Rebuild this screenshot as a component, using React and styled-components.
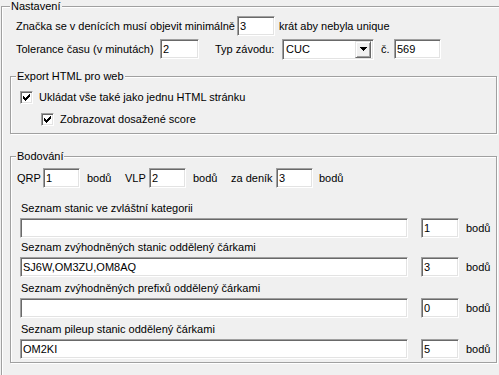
import React from "react";
import styled, { createGlobalStyle } from "styled-components";

const GlobalStyle = createGlobalStyle`
  html, body {
    margin: 0;
    padding: 0;
    background: #f0f0f0;
    overflow: hidden;
  }
  body {
    font-family: "Liberation Sans", Arial, sans-serif;
    font-size: 11px;
    color: #000;
  }
`;

const Page = styled.div`
  width: 499px;
  height: 375px;
  overflow: hidden;
  padding-left: 1px;
  box-sizing: border-box;
`;

const Group = styled.fieldset`
  margin: ${(p) => p.$margin || "0"};
  padding: 0;
  width: ${(p) => p.$w}px;
  box-sizing: border-box;
  min-width: 0;
  border: 1px solid #a0a0a0;
  box-shadow: inset 1px 1px #fff, 1px 1px #fff;
`;

const Legend = styled.legend`
  margin-left: ${(p) => p.$ml || 5}px;
  padding: 0 1px;
  line-height: 13px;
  height: 13px;
  background: #f0f0f0;
`;

const GroupBody = styled.div`
  padding: ${(p) => p.$pad};
`;

const Row = styled.div`
  display: flex;
  align-items: center;
  height: ${(p) => p.$h || 20}px;
  margin-top: ${(p) => p.$mt || 0}px;
  padding-left: ${(p) => p.$pl || 0}px;
`;

const Text = styled.span`
  white-space: nowrap;
  flex: none;
  width: ${(p) => (p.$w ? `${p.$w}px` : "auto")};
  margin-left: ${(p) => p.$ml || 0}px;
`;

const Edit = styled.input`
  box-sizing: border-box;
  flex: none;
  width: ${(p) => p.$w}px;
  height: 20px;
  margin: 0 0 0 ${(p) => p.$ml || 0}px;
  padding: 0 2px;
  border: 1px solid;
  border-color: #a0a0a0 #fff #fff #a0a0a0;
  box-shadow: inset 1px 1px #696969, inset -1px -1px #e3e3e3;
  background: #fff;
  font: inherit;
  color: #000;
  outline: none;
`;

const Combo = styled.div`
  box-sizing: border-box;
  flex: none;
  display: flex;
  align-items: center;
  width: ${(p) => p.$w}px;
  height: 21px;
  margin-left: ${(p) => p.$ml || 0}px;
  padding: 2px;
  border: 1px solid;
  border-color: #a0a0a0 #fff #fff #a0a0a0;
  box-shadow: inset 1px 1px #696969, inset -1px -1px #e3e3e3;
  background: #fff;
`;

const ComboValue = styled.span`
  flex: 1;
  padding-left: 1px;
`;

const DropButton = styled.span`
  box-sizing: border-box;
  width: 16px;
  height: 17px;
  display: flex;
  align-items: center;
  justify-content: center;
  background: #f0f0f0;
  border: 1px solid;
  border-color: #e3e3e3 #696969 #696969 #e3e3e3;
  box-shadow: inset 1px 1px #fff, inset -1px -1px #a0a0a0;
`;

const CheckRow = styled.label`
  display: flex;
  align-items: center;
  height: 16px;
  margin-top: ${(p) => p.$mt || 0}px;
  padding-left: ${(p) => p.$pl || 0}px;
  gap: 6px;
`;

const CheckBox = styled.span`
  box-sizing: border-box;
  width: 13px;
  height: 13px;
  flex: none;
  display: flex;
  align-items: center;
  justify-content: center;
  background: #fff;
  border: 1px solid;
  border-color: #a0a0a0 #fff #fff #a0a0a0;
  box-shadow: inset 1px 1px #696969, inset -1px -1px #e3e3e3;
`;

const ListLabel = styled.div`
  height: 13px;
  line-height: 13px;
  margin-top: ${(p) => p.$mt || 0}px;
  padding-left: 1px;
  white-space: nowrap;
`;

const ListRow = styled.div`
  display: flex;
  align-items: center;
  margin-top: 3px;
`;

const Check = () => (
  <CheckBox>
    <svg width="7" height="7" viewBox="0 0 7 7" shapeRendering="crispEdges">
      <path
        d="M6 0h1v3h-1v1h-1v1h-1v1h-1v1h-1v-1h-1v-1h-1v-3h1v1h1v1h1v-1h1v-1h1z"
        fill="#000"
      />
    </svg>
  </CheckBox>
);

const ListEntry = ({ label, value, points, mt }) => (
  <>
    <ListLabel $mt={mt}>{label}</ListLabel>
    <ListRow>
      <Edit $w={388} defaultValue={value} />
      <Edit $w={38} $ml={13} defaultValue={points} />
      <Text $ml={7}>bodů</Text>
    </ListRow>
  </>
);

export default function App() {
  return (
    <Page>
      <GlobalStyle />
      <Group $w={530}>
        <Legend $ml={8}>Nastavení</Legend>
        <GroupBody $pad="0 0 40px 8px">
          <Row $mt={3} $pl={6}>
            <Text>Značka se v denících musí objevit minimálně</Text>
            <Edit $w={38} $ml={2} defaultValue="3" />
            <Text $ml={4}>krát aby nebyla unique</Text>
          </Row>
          <Row $mt={3} $pl={6}>
            <Text $w={144}>Tolerance času (v minutách)</Text>
            <Edit $w={39} defaultValue="2" />
            <Text $ml={16} $w={67}>Typ závodu:</Text>
            <Combo $w={92}>
              <ComboValue>CUC</ComboValue>
              <DropButton>
                <svg width="7" height="4" viewBox="0 0 7 4" shapeRendering="crispEdges">
                  <path d="M0 0h7v1h-1v1h-1v1h-1v1h-1v-1h-1v-1h-1v-1h-1z" fill="#000" />
                </svg>
              </DropButton>
            </Combo>
            <Text $ml={7} $w={13}>č.</Text>
            <Edit $w={47} defaultValue="569" />
          </Row>

          <Group $w={487} $margin="11px 0 0 0">
            <Legend>Export HTML pro web</Legend>
            <GroupBody $pad="0 0 6px 9px">
              <CheckRow $mt={6}>
                <Check />
                <span>Ukládat vše také jako jednu HTML stránku</span>
              </CheckRow>
              <CheckRow $mt={6} $pl={21}>
                <Check />
                <span>Zobrazovat dosažené score</span>
              </CheckRow>
            </GroupBody>
          </Group>

          <Group $w={487} $margin="16px 0 0 0">
            <Legend>Bodování</Legend>
            <GroupBody $pad="0 0 3px 9px">
              <Row $mt={5} $pl={-3}>
                <Text $w={26} $ml={-3}>QRP</Text>
                <Edit $w={37} defaultValue="1" />
                <Text $ml={7} $w={38}>bodů</Text>
                <Text $w={24}>VLP</Text>
                <Edit $w={37} defaultValue="2" />
                <Text $ml={7} $w={38}>bodů</Text>
                <Text $w={45}>za deník</Text>
                <Edit $w={37} defaultValue="3" />
                <Text $ml={6}>bodů</Text>
              </Row>
              <ListEntry
                mt={14}
                label="Seznam stanic ve zvláštní kategorii"
                value=""
                points="1"
              />
              <ListEntry
                mt={3}
                label="Seznam zvýhodněných stanic oddělený čárkami"
                value="SJ6W,OM3ZU,OM8AQ"
                points="3"
              />
              <ListEntry
                mt={5}
                label="Seznam zvýhodněných prefixů oddělený čárkami"
                value=""
                points="0"
              />
              <ListEntry
                mt={5}
                label="Seznam pileup stanic oddělený čárkami"
                value="OM2KI"
                points="5"
              />
            </GroupBody>
          </Group>
        </GroupBody>
      </Group>
    </Page>
  );
}
